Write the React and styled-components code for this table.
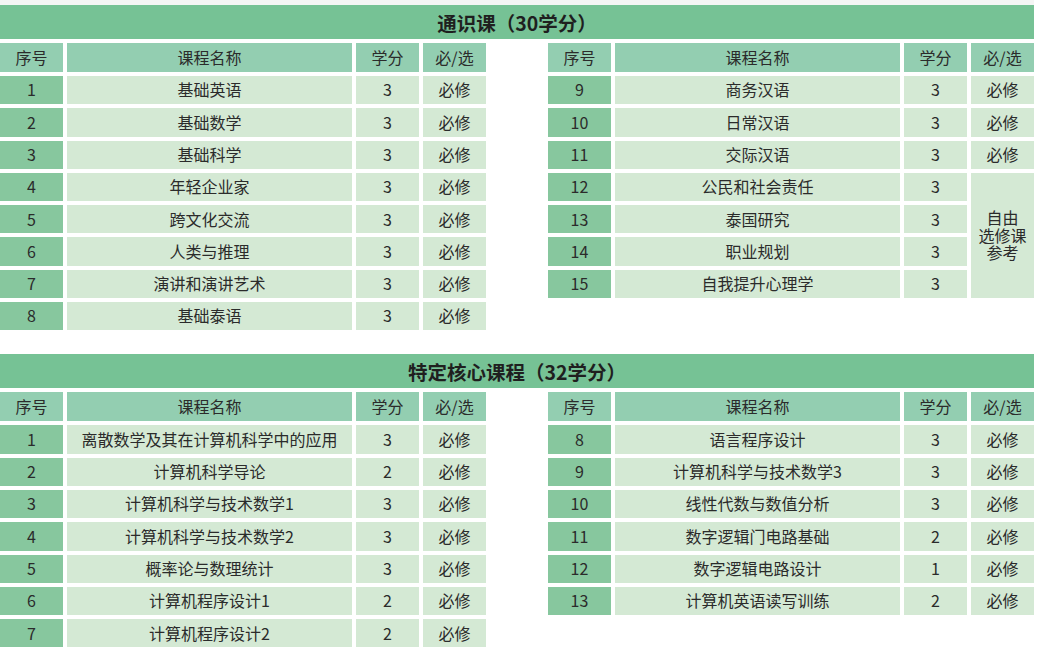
import React from "react";
import styled, { createGlobalStyle } from "styled-components";

const Global = createGlobalStyle`
  html, body { margin: 0; padding: 0; background: #ffffff; }
  body { font-family: "Noto Sans CJK SC", "Noto Sans", sans-serif; color: #2b2b2b; }
`;

const Page = styled.div`
  width: 1034px;
  border-top: 5px solid #f4f5f4;
  display: flex;
  flex-direction: column;
  gap: 24px;
`;

const Section = styled.section`
  display: flex;
  flex-direction: column;
  gap: 4px;
`;

const TitleBar = styled.div`
  height: 34px;
  background: #76c295;
  display: flex;
  align-items: center;
  justify-content: center;
  font-size: 19.5px;
  font-weight: 700;
  color: #1f1f1f;
`;

const Tables = styled.div`
  display: flex;
  gap: 62px;
  align-items: flex-start;
`;

const Table = styled.div`
  display: grid;
  grid-template-columns: 63px 285px 63px 63px;
  grid-template-rows: 29px;
  grid-auto-rows: 28.3px;
  column-gap: 4px;
  row-gap: 4px;
`;

const Cell = styled.div`
  display: flex;
  align-items: center;
  justify-content: center;
  text-align: center;
  font-size: 16px;
  line-height: 1.1;
  color: #2b2b2b;
  white-space: nowrap;
  background: ${(p) =>
    p.$kind === "head" ? "#93ceb1" : p.$kind === "seq" ? "#87c79e" : "#d4e9d4"};
  ${(p) => (p.$span ? `grid-row: span ${p.$span};` : "")}
`;

const heads = ["序号", "课程名称", "学分", "必/选"];

function CourseTable({ rows }) {
  return (
    <Table>
      {heads.map((h) => (
        <Cell key={h} $kind="head">{h}</Cell>
      ))}
      {rows.map((r) => (
        <React.Fragment key={r[0]}>
          <Cell $kind="seq">{r[0]}</Cell>
          <Cell>{r[1]}</Cell>
          <Cell>{r[2]}</Cell>
          {r[3] !== null && <Cell $span={r[4]}>{r[3]}</Cell>}
        </React.Fragment>
      ))}
    </Table>
  );
}

const general1 = [
  [1, "基础英语", 3, "必修"],
  [2, "基础数学", 3, "必修"],
  [3, "基础科学", 3, "必修"],
  [4, "年轻企业家", 3, "必修"],
  [5, "跨文化交流", 3, "必修"],
  [6, "人类与推理", 3, "必修"],
  [7, "演讲和演讲艺术", 3, "必修"],
  [8, "基础泰语", 3, "必修"],
];

const general2 = [
  [9, "商务汉语", 3, "必修"],
  [10, "日常汉语", 3, "必修"],
  [11, "交际汉语", 3, "必修"],
  [12, "公民和社会责任", 3, (<>自由<br />选修课<br />参考</>), 4],
  [13, "泰国研究", 3, null],
  [14, "职业规划", 3, null],
  [15, "自我提升心理学", 3, null],
];

const core1 = [
  [1, "离散数学及其在计算机科学中的应用", 3, "必修"],
  [2, "计算机科学导论", 2, "必修"],
  [3, "计算机科学与技术数学1", 3, "必修"],
  [4, "计算机科学与技术数学2", 3, "必修"],
  [5, "概率论与数理统计", 3, "必修"],
  [6, "计算机程序设计1", 2, "必修"],
  [7, "计算机程序设计2", 2, "必修"],
];

const core2 = [
  [8, "语言程序设计", 3, "必修"],
  [9, "计算机科学与技术数学3", 3, "必修"],
  [10, "线性代数与数值分析", 3, "必修"],
  [11, "数字逻辑门电路基础", 2, "必修"],
  [12, "数字逻辑电路设计", 1, "必修"],
  [13, "计算机英语读写训练", 2, "必修"],
];

export default function App() {
  return (
    <>
      <Global />
      <Page>
        <Section>
          <TitleBar>通识课（30学分）</TitleBar>
          <Tables>
            <CourseTable rows={general1} />
            <CourseTable rows={general2} />
          </Tables>
        </Section>
        <Section>
          <TitleBar>特定核心课程（32学分）</TitleBar>
          <Tables>
            <CourseTable rows={core1} />
            <CourseTable rows={core2} />
          </Tables>
        </Section>
      </Page>
    </>
  );
}
